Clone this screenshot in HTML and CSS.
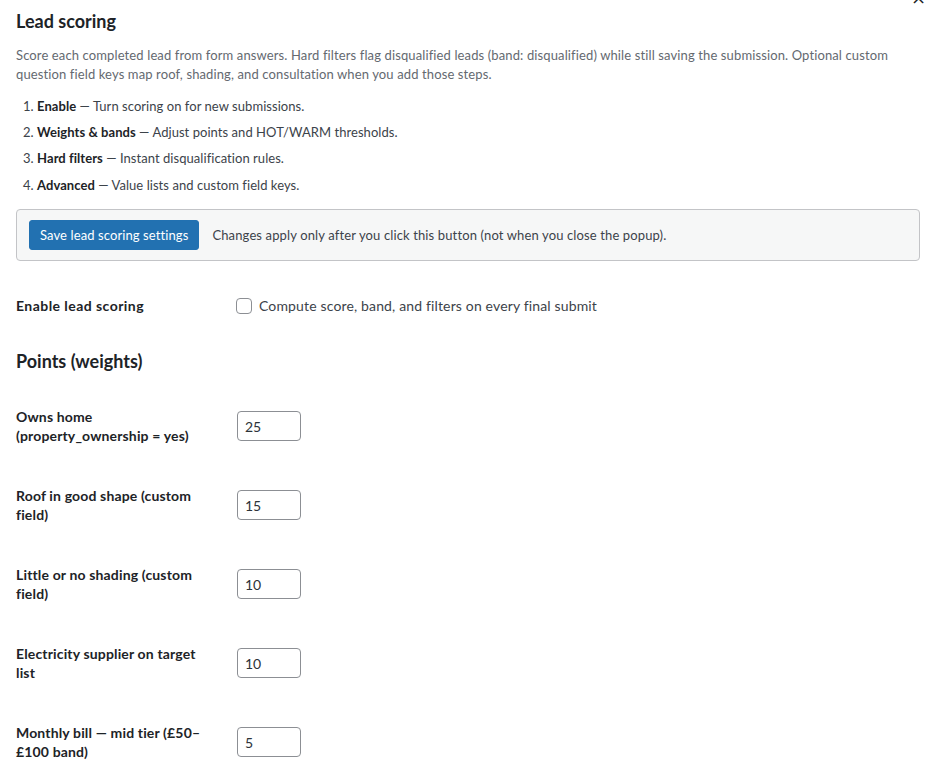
FILE: index.html
```html
<!DOCTYPE html>
<html lang="en">
<head>
    <meta charset="UTF-8">
    <meta name="viewport" content="width=device-width, initial-scale=1.0">
    <title>Lead scoring</title>
    <link rel="stylesheet" href="styles.css">
</head>
<body>

    <button class="close" type="button" aria-label="Close">&times;</button>

    <div class="panel">
        <h2 class="title">Lead scoring</h2>
        <p class="intro">Score each completed lead from form answers. Hard filters flag disqualified leads (band: disqualified) while still saving the submission. Optional custom question field keys map roof, shading, and consultation when you add those steps.</p>

        <ol class="steps">
            <li><strong>Enable</strong> — Turn scoring on for new submissions.</li>
            <li><strong>Weights &amp; bands</strong> — Adjust points and HOT/WARM thresholds.</li>
            <li><strong>Hard filters</strong> — Instant disqualification rules.</li>
            <li><strong>Advanced</strong> — Value lists and custom field keys.</li>
        </ol>

        <div class="notice">
            <button class="button-primary" type="button">Save lead scoring settings</button>
            <span class="notice-text">Changes apply only after you click this button (not when you close the popup).</span>
        </div>

        <div class="enable-row">
            <span class="field-label enable-label">Enable lead scoring</span>
            <label class="check">
                <input type="checkbox">
                <span>Compute score, band, and filters on every final submit</span>
            </label>
        </div>

        <h3 class="section-title">Points (weights)</h3>

        <div class="weights">
            <div class="field-row">
                <label class="field-label" for="w-home">Owns home (property_ownership = yes)</label>
                <input class="small-text" id="w-home" type="number" value="25">
            </div>
            <div class="field-row">
                <label class="field-label" for="w-roof">Roof in good shape (custom field)</label>
                <input class="small-text" id="w-roof" type="number" value="15">
            </div>
            <div class="field-row">
                <label class="field-label" for="w-shade">Little or no shading (custom field)</label>
                <input class="small-text" id="w-shade" type="number" value="10">
            </div>
            <div class="field-row">
                <label class="field-label" for="w-supplier">Electricity supplier on target list</label>
                <input class="small-text" id="w-supplier" type="number" value="10">
            </div>
            <div class="field-row">
                <label class="field-label" for="w-bill">Monthly bill — mid tier (£50–£100 band)</label>
                <input class="small-text" id="w-bill" type="number" value="5">
            </div>
        </div>
    </div>

</body>
</html>
```

FILE: styles.css
```css
body {
    margin: 0;
    background-color: #fff;
    color: #1d2327;
    font-family: Lato, "Noto Sans", sans-serif;
    font-size: 13px;
    overflow: hidden;
}
.close {
    position: absolute;
    top: -13px;
    right: 10px;
    border: 0;
    background: none;
    font-family: "DejaVu Sans", sans-serif;
    font-size: 18px;
    color: #1d2327;
    padding: 0;
    cursor: pointer;
}
.panel {
    padding: 0 16px;
}
.title {
    margin: 10px 0 0;
    font-size: 18px;
    line-height: 22px;
    font-weight: 700;
}
.intro {
    margin: 14px 0 0;
    color: #646970;
    line-height: 19px;
    letter-spacing: 0.12px;
}
.steps {
    list-style: none;
    counter-reset: step;
    margin: 13px 0 0;
    padding: 0 0 0 7px;
    color: #3c434a;
    letter-spacing: 0.05px;
}
.steps li {
    counter-increment: step;
    line-height: 19px;
    margin-bottom: 7px;
}
.steps li:nth-child(4) {
    margin-top: 8px;
}
.steps li::before {
    content: counter(step) ". ";
}
.steps strong {
    color: #1d2327;
}
.notice {
    display: flex;
    align-items: center;
    gap: 13px;
    margin-top: 14px;
    padding: 10px 12px;
    background-color: #f6f7f7;
    border: 1px solid #c3c4c7;
    border-radius: 4px;
}
.button-primary {
    height: 30px;
    padding: 0 10px;
    border: 1px solid #2271b1;
    border-radius: 3px;
    background-color: #2271b1;
    color: #fff;
    font-family: inherit;
    font-size: 13px;
    letter-spacing: 0.1px;
    cursor: pointer;
}
.notice-text {
    color: #3c434a;
    letter-spacing: 0.13px;
}
.enable-row {
    display: grid;
    grid-template-columns: 220px 1fr;
    align-items: center;
    margin-top: 35px;
}
.field-label {
    font-size: 14px;
    font-weight: 700;
    line-height: 19px;
    color: #1d2327;
    letter-spacing: 0.15px;
}
.enable-label {
    letter-spacing: 0.45px;
}
.check {
    display: flex;
    align-items: center;
    gap: 7px;
    font-size: 14px;
    color: #3c434a;
    letter-spacing: 0.15px;
}
.check input {
    appearance: none;
    width: 16px;
    height: 16px;
    margin: 0;
    border: 1px solid #8c8f94;
    border-radius: 4px;
    background: #fff;
}
.section-title {
    margin: 35px 0 0;
    font-size: 18px;
    line-height: 22px;
    font-weight: 700;
}
.weights {
    display: flex;
    flex-direction: column;
    gap: 41px;
    margin-top: 35px;
}
.field-row {
    display: grid;
    grid-template-columns: 221px 64px;
    align-items: start;
    height: 38px;
}
.field-row .field-label {
    width: 202px;
}
.small-text {
    box-sizing: border-box;
    width: 64px;
    height: 30px;
    margin-top: 4px;
    padding: 0 7px;
    border: 1px solid #8c8f94;
    border-radius: 4px;
    font-family: inherit;
    font-size: 14px;
    color: #2c3338;
    -moz-appearance: textfield;
}
.small-text::-webkit-outer-spin-button,
.small-text::-webkit-inner-spin-button {
    -webkit-appearance: none;
    margin: 0;
}
```
